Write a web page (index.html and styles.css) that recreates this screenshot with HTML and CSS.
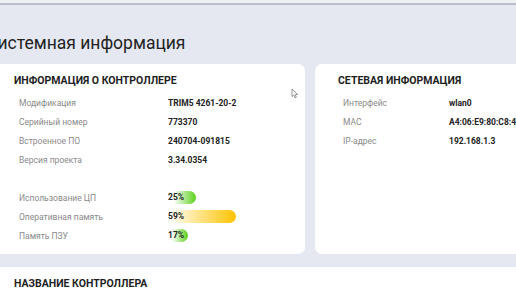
FILE: index.html
```html
<!DOCTYPE html>
<html lang="ru">

<head>
    <meta charset="UTF-8">
    <meta name="viewport" content="width=device-width, initial-scale=1.0">
    <title>Системная информация</title>
    <link rel="stylesheet" href="styles.css">
</head>

<body>
    <div class="topbar"></div>
    <div class="page">
        <h1 class="title">Системная информация</h1>
        <div class="cards">
            <div class="card card--main">
                <div class="card__head">Информация о контроллере</div>
                <div class="rows">
                    <div class="label">Модификация</div>
                    <div class="value">TRIM5 4261-20-2</div>
                    <div class="label">Серийный номер</div>
                    <div class="value">773370</div>
                    <div class="label">Встроенное ПО</div>
                    <div class="value">240704-091815</div>
                    <div class="label">Версия проекта</div>
                    <div class="value">3.34.0354</div>
                    <div class="spacer"></div>
                    <div class="label">Использование ЦП</div>
                    <div class="value"><span class="bar bar--green" style="width: 28px">25%</span></div>
                    <div class="label">Оперативная память</div>
                    <div class="value"><span class="bar bar--yellow" style="width: 68px">59%</span></div>
                    <div class="label">Память ПЗУ</div>
                    <div class="value"><span class="bar bar--green" style="width: 20px">17%</span></div>
                </div>
                <svg class="cursor" width="8" height="11" viewBox="0 0 8 11">
                    <path d="M1 1 L1 8.5 L2.8 7 L4 9.8 L5.3 9.2 L4.2 6.6 L6.6 6.4 Z" fill="#fff" stroke="#8a8a8a" stroke-width="0.9" stroke-linejoin="round" />
                </svg>
            </div>
            <div class="card card--net">
                <div class="card__head">Сетевая информация</div>
                <div class="rows">
                    <div class="label">Интерфейс</div>
                    <div class="value">wlan0</div>
                    <div class="label">MAC</div>
                    <div class="value">A4:06:E9:80:C8:4C</div>
                    <div class="label">IP-адрес</div>
                    <div class="value">192.168.1.3</div>
                </div>
            </div>
        </div>
        <div class="card card--name">
            <div class="card__head">Название контроллера</div>
        </div>
    </div>
</body>

</html>
```

FILE: styles.css
```css
* {
    box-sizing: border-box;
    margin: 0;
    padding: 0;
}

body {
    background: #e5e8f1;
    font-family: Roboto, "Noto Sans", sans-serif;
    color: #222;
    overflow: hidden;
    width: 516px;
    height: 290px;
}

.topbar {
    height: 5px;
    background: #eef0f6;
    border-bottom: 2px solid #bbbfcc;
}

.page {
    margin-left: -9px;
    width: 660px;
}

.title {
    font-size: 17.5px;
    font-weight: 400;
    color: #222;
    height: 59px;
    line-height: 22px;
    padding-top: 27px;
    margin-left: -5px;
}

.cards {
    display: flex;
    gap: 10px;
}

.card {
    background: #fff;
    border-radius: 7px;
    padding: 10px 0 9px 23px;
    position: relative;
}

.card--main {
    width: 314px;
}

.card--net {
    width: 330px;
}

.card--name {
    margin-top: 13px;
    height: 40px;
}

.card__head {
    font-size: 10.5px;
    font-weight: 700;
    text-transform: uppercase;
    line-height: 14px;
    color: #1e1e1e;
    margin-bottom: 5px;
}

.rows {
    display: grid;
    grid-template-columns: 149px auto;
    grid-auto-rows: 19px;
    align-items: center;
    padding-left: 5px;
}

.card--net .rows {
    grid-template-columns: 106px auto;
}

.label {
    font-size: 8.5px;
    color: #8a8a8a;
}

.value {
    font-size: 8.5px;
    font-weight: 700;
    color: #222;
    white-space: nowrap;
}

.spacer {
    grid-column: 1 / 3;
}

.bar {
    display: inline-block;
    height: 13px;
    line-height: 13px;
    border-radius: 7px;
    vertical-align: middle;
}

.bar--green {
    background: linear-gradient(to right, #ffffff 20%, #5cd11a);
}

.bar--yellow {
    background: linear-gradient(to right, #ffffff 0%, #ffc300);
}

.cursor {
    position: absolute;
    left: 300px;
    top: 24px;
}
```
